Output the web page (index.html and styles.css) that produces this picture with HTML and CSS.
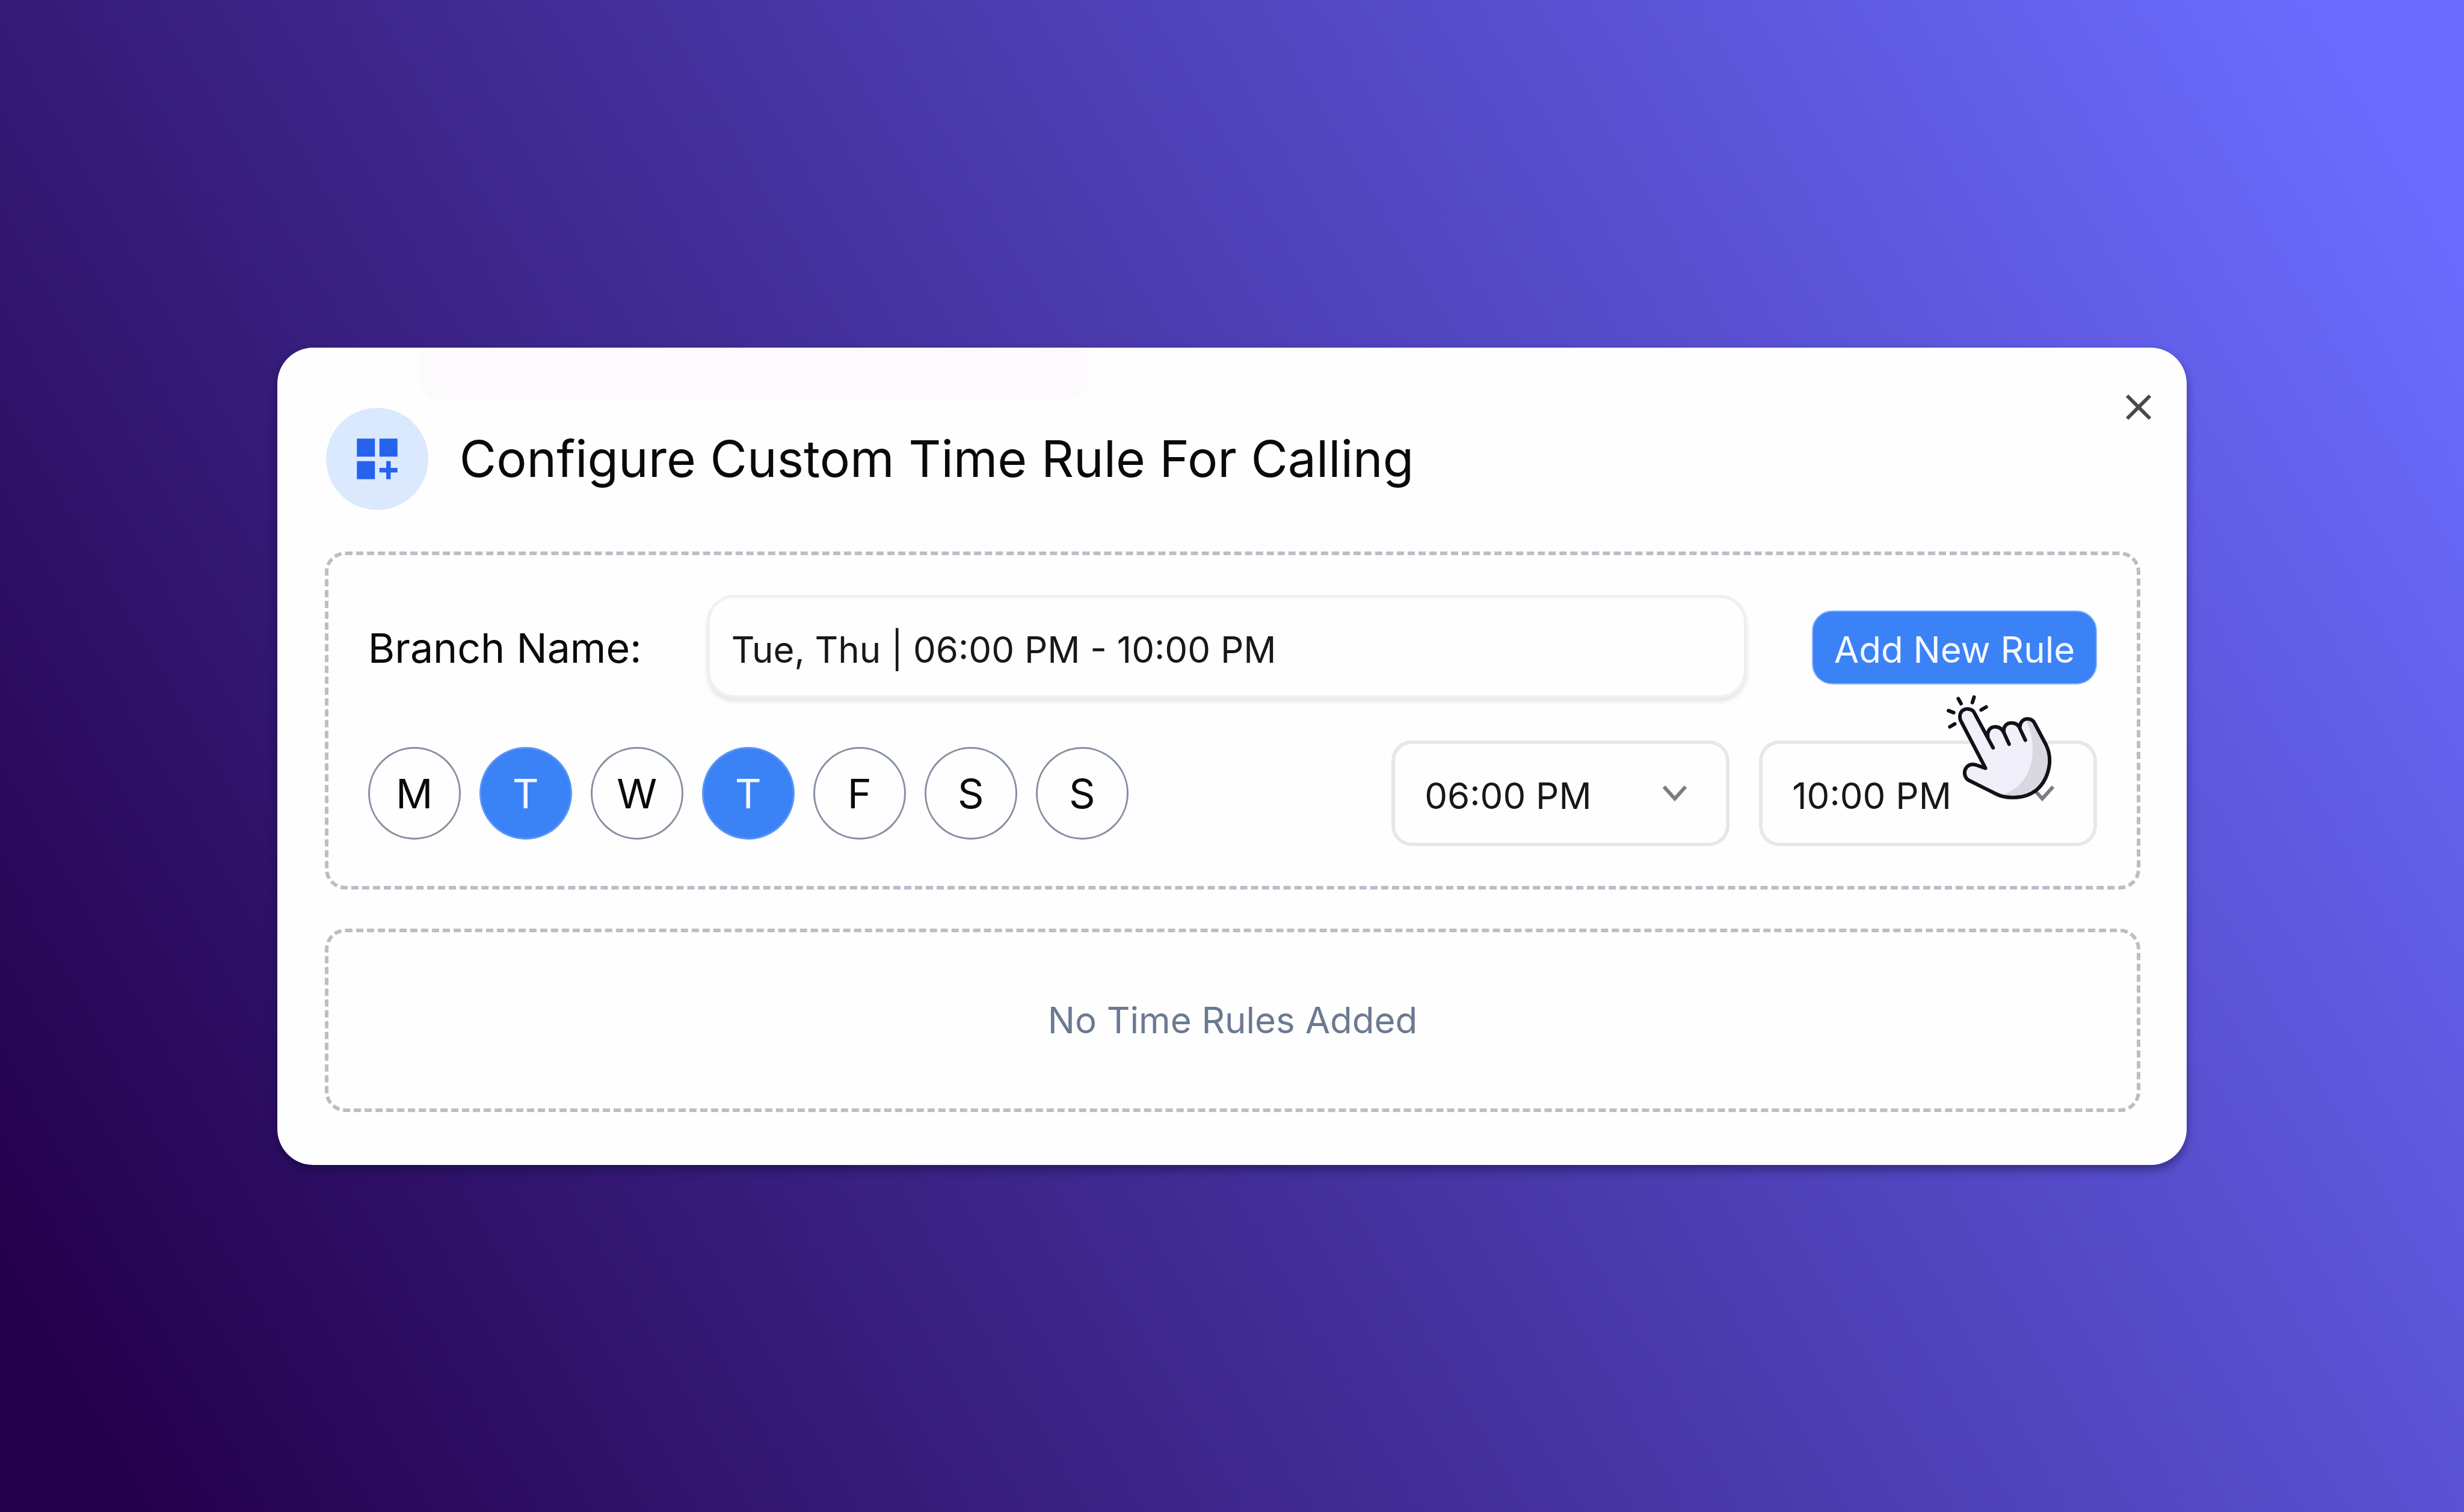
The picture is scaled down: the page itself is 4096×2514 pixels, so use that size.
FILE: index.html
```html
<!DOCTYPE html>
<html lang="en">
<head>
  <meta charset="utf-8">
  <title>Configure Custom Time Rule For Calling</title>
  <link rel="stylesheet" href="styles.css">
</head>
<body class="page">
  <main class="card">
    <div class="card-tint"></div>
    <button class="close" type="button" aria-label="Close">
      <svg class="close-icon" viewBox="0 0 46 46"><path d="M4 4 42 42M42 4 4 42"/></svg>
    </button>

    <header class="card-header">
      <span class="badge">
        <svg class="badge-icon" viewBox="0 0 24 24"><path d="M3 11h8V3H3zM13 3v8h8V3zM3 21h8v-8H3zM18 13h-2v3h-3v2h3v3h2v-3h3v-2h-3z"/></svg>
      </span>
      <h1 class="title">Configure Custom Time Rule For Calling</h1>
    </header>

    <form class="panel rule-form">
      <div class="row">
        <label class="label" for="branch">Branch Name:</label>
        <input class="text-input" id="branch" type="text" value="Tue, Thu | 06:00 PM - 10:00 PM">
        <button class="add-button" type="button">Add New Rule</button>
      </div>
      <div class="row row-split">
        <div class="days">
          <button class="day" type="button" aria-label="Monday">M</button>
          <button class="day day-on" type="button" aria-label="Tuesday" aria-pressed="true">T</button>
          <button class="day" type="button" aria-label="Wednesday">W</button>
          <button class="day day-on" type="button" aria-label="Thursday" aria-pressed="true">T</button>
          <button class="day" type="button" aria-label="Friday">F</button>
          <button class="day" type="button" aria-label="Saturday">S</button>
          <button class="day" type="button" aria-label="Sunday">S</button>
        </div>
        <div class="times">
          <div class="time">
            <select class="time-select" aria-label="Start time"><option>06:00 PM</option></select>
            <svg class="chevron" viewBox="0 0 42 28"><path d="M3 3 21 23 39 3"/></svg>
          </div>
          <div class="time">
            <select class="time-select" aria-label="End time"><option>10:00 PM</option></select>
            <svg class="chevron" viewBox="0 0 42 28"><path d="M3 3 21 23 39 3"/></svg>
            <svg class="pointer" viewBox="0 0 180 177">
              <path class="hand-fill" d="M67.600 123.300 27 46C22 36 27 25 37.400 24.800C44 24.800 48 28 50 33L71.500 75C70 63 74 54.500 83.500 54.500C91 54.500 96 59 98 66C96 55 102 47.900 110.400 47.900C118 47.900 123 52 125 60C123 48 129 41.200 137.400 41.200C144 41.200 148 45 150 50L168 84C174 96 175 108 173.700 118C171 138 163 150 153 159C142 168 127 172.500 112 172C103 171.500 96 171 88 167L39 143C31 136 31 127 36 122C40 117 46 116 52.200 118Z"/>
              <path class="hand-shade" d="M135 43C143 42 148 45 150 50L168 84C174 96 175 108 173.700 118C171 138 163 150 153 159C142 168 127 172.500 112 172L97 167C128 157 146 128 146 92C146 72 141 56 135 43Z"/>
              <path class="hand-line" d="M80.200 89.400 50 33C48 28 44 24.800 37.400 24.800C27 25 23 34 26 43.500L67.600 123.300 52.200 118C46 116 40 117 36 122C31 128 32 138 39 143L86 166.500C95 171 103 172 112 172C127 172.500 142 168 153 159C163 150 171 138 173.700 118C175 107 173 94 168 84L150 50C148 45 144 41.200 137.400 41.200C129 41.200 123.500 49 125 58L133.800 76.600M106.800 83.300 98.500 65C96 55 102 47.900 110.400 47.900C118 47.900 123 52 125 58M98.500 65C96 59 91 54.500 83.500 54.500C74 54.500 70 63 71.500 72"/>
              <path class="rays" d="M22.300 7.600 27 16M48.600 5.100 45.700 14.200M60.400 26.400 68.700 21.500M6.100 27.600 14.700 30.900M8.300 54.500 16.500 49.700"/>
            </svg>
          </div>
        </div>
      </div>
    </form>

    <section class="panel empty">No Time Rules Added</section>
  </main>
</body>
</html>
```
FILE: styles.css
```css
* {
  box-sizing: border-box;
}

.page {
  margin: 0;
  min-height: 100vh;
  display: flex;
  align-items: center;
  justify-content: center;
  background: linear-gradient(60deg, #24004c 4%, #6b6cff 96%);
  color: #0a0a0a;
  font-family: Inter, "Liberation Sans", sans-serif;
  font-optical-sizing: none;
}

.card {
  position: relative;
  width: 77.5vw;
  padding: 100px 77px 88px 79px;
  border-radius: 60px;
  background: #fefefe;
  box-shadow: 0 8px 16px rgba(10, 10, 50, 0.45);
}

.card-tint {
  position: absolute;
  top: 4px;
  left: 7.5%;
  width: 35%;
  height: 82px;
  border-radius: 0 0 30px 30px;
  background: #fcfafd;
}

.close {
  position: absolute;
  top: 76px;
  right: 57px;
  padding: 0;
  border: 0;
  background: none;
}

.close-icon {
  display: block;
  width: 46px;
  height: 46px;
  fill: none;
  stroke: #4a4a4c;
  stroke-width: 6;
}

.card-header {
  position: relative;
  display: flex;
  align-items: center;
  gap: 52px;
  margin-bottom: 69px;
  padding-left: 2px;
}

.badge {
  display: flex;
  align-items: center;
  justify-content: center;
  width: 170px;
  height: 170px;
  border-radius: 50%;
  background: #dbe9fe;
}

.badge-icon {
  width: 90px;
  height: 90px;
  fill: #2563eb;
}

.title {
  margin: 0;
  font-size: 84px;
  line-height: 104px;
  font-weight: 400;
}

.panel {
  border: 6px dashed #b9bec7;
  border-radius: 34px;
}

.rule-form {
  display: flex;
  flex-direction: column;
  gap: 70px;
  padding: 66px;
  margin-bottom: 65px;
}

.row {
  display: flex;
  align-items: center;
  gap: 108px;
}

.row-split {
  justify-content: space-between;
}

.label {
  padding-top: 4px;
  font-size: 68px;
  line-height: 84px;
}

.text-input {
  flex: 1;
  min-width: 0;
  height: 172px;
  padding: 10px 36px 0;
  border: 5px solid #f0f0f2;
  border-radius: 46px;
  background: #fefefe;
  box-shadow: 0 6px 6px rgba(30, 30, 50, 0.1);
  color: #18181b;
  font: inherit;
  font-size: 60px;
}

.add-button {
  height: 123px;
  margin-top: 4px;
  padding: 6px 35px 0;
  border: 2px solid #8bb3fa;
  border-radius: 34px;
  background: #3b82f6;
  color: #f4f8ff;
  font: inherit;
  font-size: 60px;
  white-space: nowrap;
}

.days {
  display: flex;
  gap: 31px;
}

.day {
  width: 154px;
  height: 154px;
  padding: 0;
  border: 3px solid #8590a2;
  border-radius: 50%;
  background: #fefefe;
  color: #0a0a0a;
  font: inherit;
  font-size: 68px;
}

.day-on {
  border-color: #5b95f7;
  background: #3b82f6;
  color: #f4f8ff;
}

.times {
  display: flex;
  gap: 49px;
}

.time {
  position: relative;
}

.time-select {
  display: block;
  width: 562px;
  height: 176px;
  padding: 8px 49px 0;
  border: 6px solid #e5e8eb;
  border-radius: 34px;
  background: #fefefe;
  color: #18181b;
  font: inherit;
  font-size: 60px;
  appearance: none;
}

.chevron {
  position: absolute;
  top: 74px;
  right: 70px;
  width: 42px;
  height: 28px;
  fill: none;
  stroke: #7c7c80;
  stroke-width: 6;
  pointer-events: none;
}

.pointer {
  position: absolute;
  top: -77px;
  right: 73px;
  width: 180px;
  height: 177px;
  pointer-events: none;
}

.hand-fill {
  fill: #f0effa;
}

.hand-shade {
  fill: #d9d8e2;
}

.hand-line,
.rays {
  fill: none;
  stroke: #121116;
  stroke-width: 6;
  stroke-linecap: round;
  stroke-linejoin: round;
}

.empty {
  display: flex;
  align-items: center;
  justify-content: center;
  height: 305px;
  color: #6b7a90;
  font-size: 60px;
}
```
